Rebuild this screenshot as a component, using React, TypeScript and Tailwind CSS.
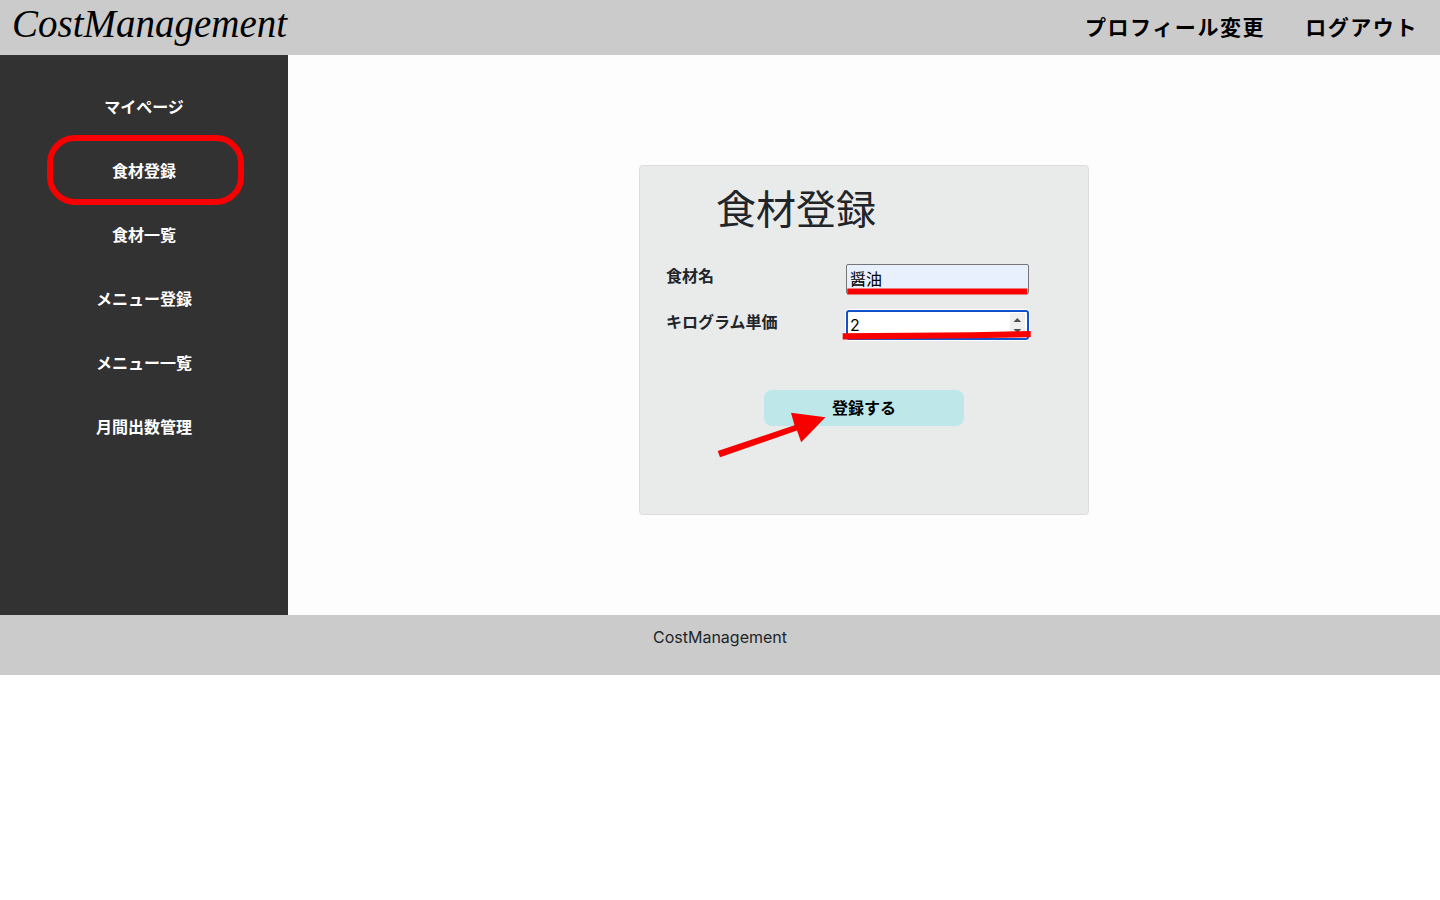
import React, { useState } from "react";

const menuItems: { label: string; href: string; marked?: boolean }[] = [
  { label: "マイページ", href: "#mypage" },
  { label: "食材登録", href: "#food-new", marked: true },
  { label: "食材一覧", href: "#food-list" },
  { label: "メニュー登録", href: "#menu-new" },
  { label: "メニュー一覧", href: "#menu-list" },
  { label: "月間出数管理", href: "#monthly" },
];

function Header() {
  return (
    <header className="flex h-[55px] items-center justify-between bg-[#cbcbcb] pr-[22px] pl-3 text-black">
      <a
        href="#top"
        className="pb-2 font-['Apple_Chancery','URW_Chancery_L','Liberation_Serif',serif] text-[39px] leading-[46px] italic"
      >
        CostManagement
      </a>
      <nav className="flex gap-10 text-[21px] leading-8 font-bold tracking-[0.075em]">
        <a href="#profile">プロフィール変更</a>
        <a href="#logout">ログアウト</a>
      </nav>
    </header>
  );
}

function Sidebar() {
  return (
    <nav className="w-1/5 bg-[#323232] pt-5">
      <ul>
        {menuItems.map((item) => (
          <li key={item.href}>
            <a
              href={item.href}
              className="relative flex h-16 items-center justify-center font-bold text-white"
            >
              {item.label}
              {item.marked && (
                <span className="absolute -top-1 left-[47px] h-[70px] w-[197px] rounded-[28px] border-6 border-[#f80000]" />
              )}
            </a>
          </li>
        ))}
      </ul>
    </nav>
  );
}

function FoodForm() {
  const [name, setName] = useState("醤油");
  const [price, setPrice] = useState("2");
  return (
    <form
      onSubmit={(e) => e.preventDefault()}
      className="min-h-[350px] w-[450px] rounded border border-[#dbdddc] bg-[#e9ebea] px-[26px] py-5"
    >
      <h1 className="ml-[50px] text-[40px] leading-[48px]">食材登録</h1>
      <div className="mt-[30px] flex flex-col gap-4">
        <div className="flex items-start">
          <label htmlFor="food-name" className="w-[180px] font-bold">
            食材名
          </label>
          <div className="relative">
            <input
              id="food-name"
              type="text"
              value={name}
              onChange={(e) => setName(e.target.value)}
              className="block h-[30px] w-[183px] rounded-xs border border-[#767676] bg-[#e8f0fe] px-[3px] pb-[2px] text-black outline-none"
            />
            <svg
              className="pointer-events-none absolute top-6 left-0"
              width="183"
              height="8"
              viewBox="0 0 183 8"
              aria-hidden="true"
            >
              <path d="M1.3 0.6H181.3V6.6H1.3Z" fill="#f80000" />
            </svg>
          </div>
        </div>
        <div className="flex items-start">
          <label htmlFor="food-price" className="w-[180px] font-bold">
            キログラム単価
          </label>
          <div className="relative">
            <input
              id="food-price"
              type="number"
              value={price}
              onChange={(e) => setPrice(e.target.value)}
              className="block h-[30px] w-[183px] rounded-[3px] border-2 border-[#1151cc] bg-white px-[2px] text-black ring-1 ring-white outline-none"
            />
            {/* Spin button face, then the red marker line over it */}
            <svg
              className="pointer-events-none absolute top-0 -left-1"
              width="190"
              height="32"
              viewBox="0 0 190 32"
              aria-hidden="true"
            >
              <path d="M168 3H183V27H168Z" fill="#efefef" />
              <path d="M171.5 12L175.3 8L179.2 12ZM171.5 19L175.3 23L179.2 19Z" fill="#505050" />
              <path d="M0.7 23.3L130 22.3L188.7 21V27.2L130 28.2L0.7 29.4Z" fill="#f80000" />
            </svg>
          </div>
        </div>
      </div>
      <div className="mt-[50px] flex justify-center">
        <div className="relative">
          <button
            type="submit"
            className="block h-9 w-[200px] rounded-lg bg-[#bee7ea] font-bold text-black"
          >
            登録する
          </button>
          <svg
            className="pointer-events-none absolute top-5 -left-12"
            width="112"
            height="50"
            viewBox="716 410 112 50"
            aria-hidden="true"
          >
            <path
              d="M717.7 450.9L794.5 425.3L791 412.7L825.5 417.3L801.2 442.3L797 430.6L720 457.2Z"
              fill="#f80000"
            />
          </svg>
        </div>
      </div>
    </form>
  );
}

export default function App() {
  return (
    <div className="min-h-screen bg-white font-[Inter,'Noto_Sans_CJK_JP',sans-serif] text-base leading-6 text-[#212529]">
      <Header />
      <div className="flex min-h-[560px]">
        <Sidebar />
        <main className="flex flex-1 items-start justify-center bg-[#fdfdfd] pt-[110px] pb-[100px]">
          <FoodForm />
        </main>
      </div>
      <footer className="h-[60px] bg-[#cbcbcb] pt-[10px] text-center">CostManagement</footer>
    </div>
  );
}
